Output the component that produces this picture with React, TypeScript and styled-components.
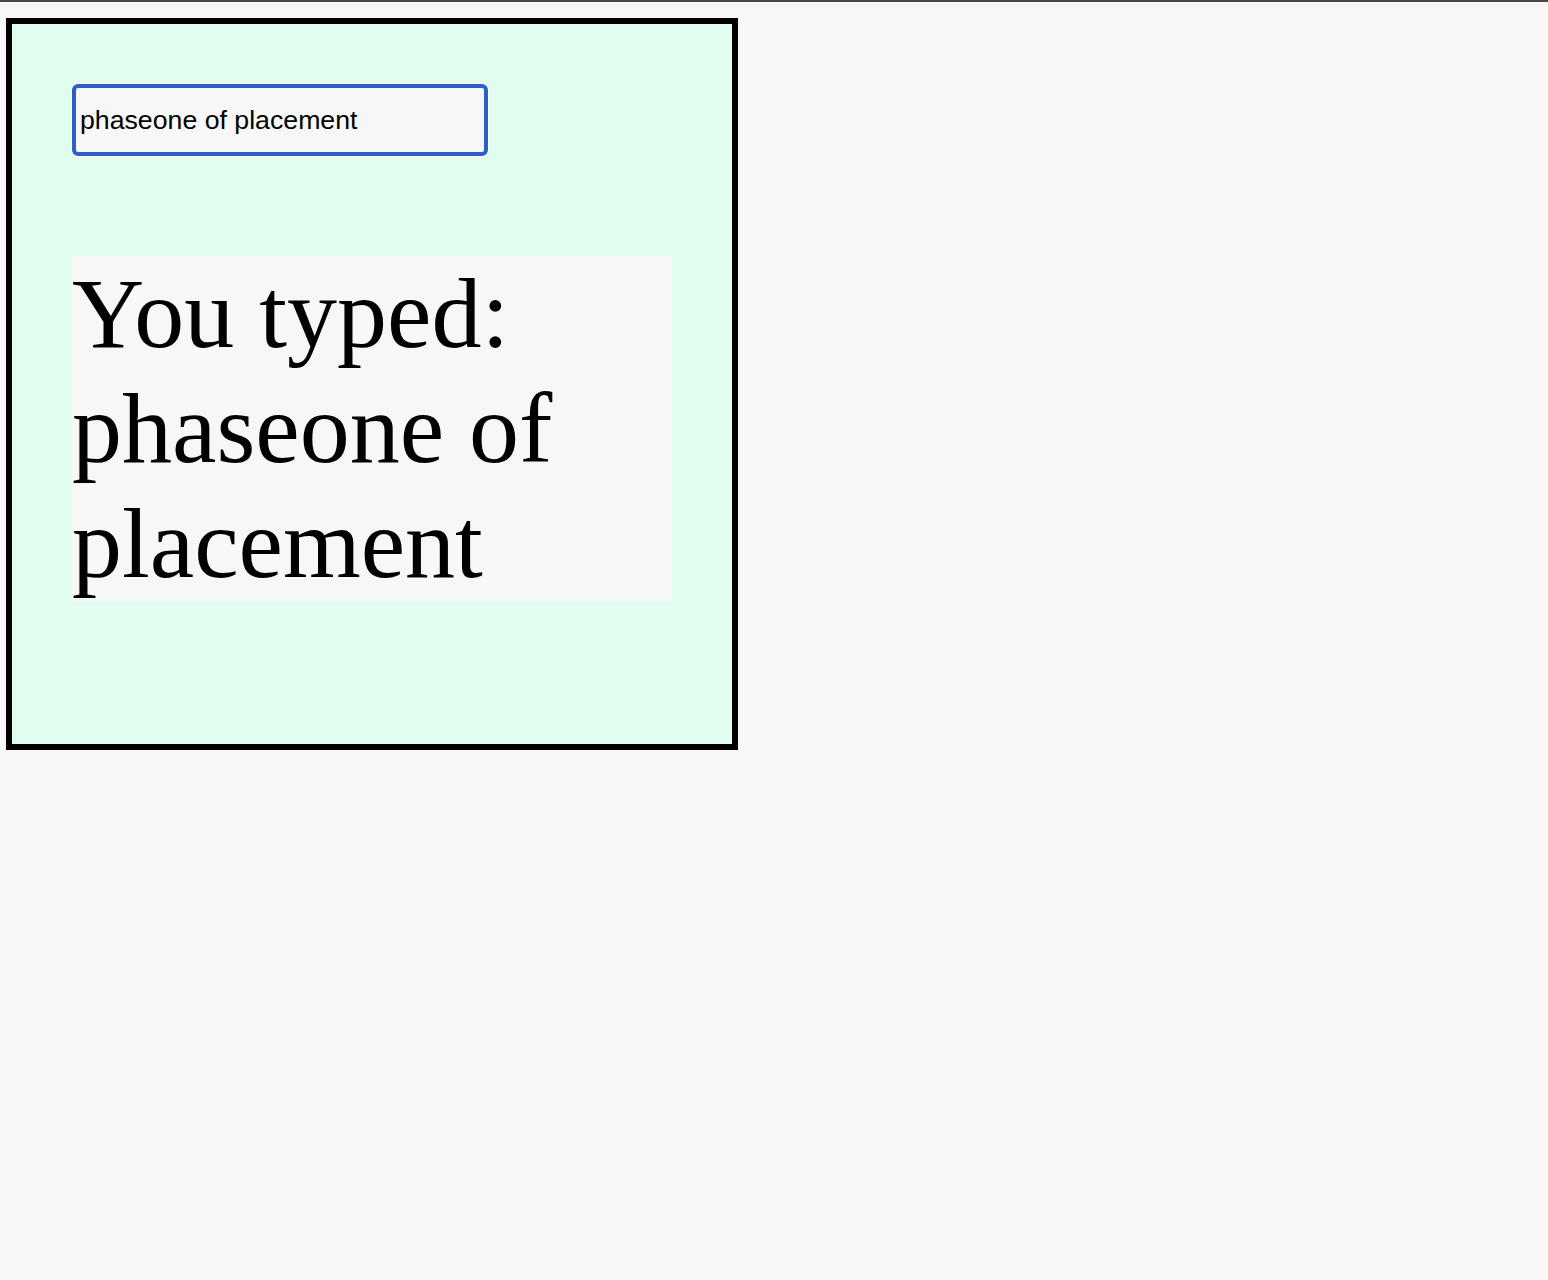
import React, { useState } from "react";
import styled, { createGlobalStyle } from "styled-components";

const GlobalStyle = createGlobalStyle`
  html, body {
    margin: 0;
    padding: 0;
    background: #f7f7f7;
  }
  body {
    border-top: 2px solid #45474a;
    min-height: 1278px;
  }
`;

const Page = styled.div`
  padding: 16px 6px;
`;

const Frame = styled.div`
  box-sizing: border-box;
  width: 732px;
  height: 732px;
  border: 6px solid #000;
  background: #e0fdf0;
  padding: 60px;
  display: flex;
  flex-direction: column;
  align-items: flex-start;
`;

const TextInput = styled.input`
  box-sizing: border-box;
  width: 416px;
  height: 72px;
  border: 4px solid #2c5ec6;
  border-radius: 6px;
  box-shadow: 0 0 0 1px #ffffff;
  outline: none;
  background: #f7f7f7;
  padding: 0 4px;
  font-family: "Liberation Sans", Arial, sans-serif;
  font-size: 26.7px;
  color: #000;
`;

const Echo = styled.div`
  margin-top: 100px;
  width: 600px;
  background: #f7f7f7;
  font-family: "Liberation Serif", "Times New Roman", serif;
  font-size: 100px;
  line-height: 115px;
  color: #000;
`;

export default function App() {
  const [value, setValue] = useState("phaseone of placement");
  return (
    <>
      <GlobalStyle />
      <Page>
        <Frame>
          <TextInput value={value} onChange={(e) => setValue(e.target.value)} />
          <Echo>You typed: {value}</Echo>
        </Frame>
      </Page>
    </>
  );
}
